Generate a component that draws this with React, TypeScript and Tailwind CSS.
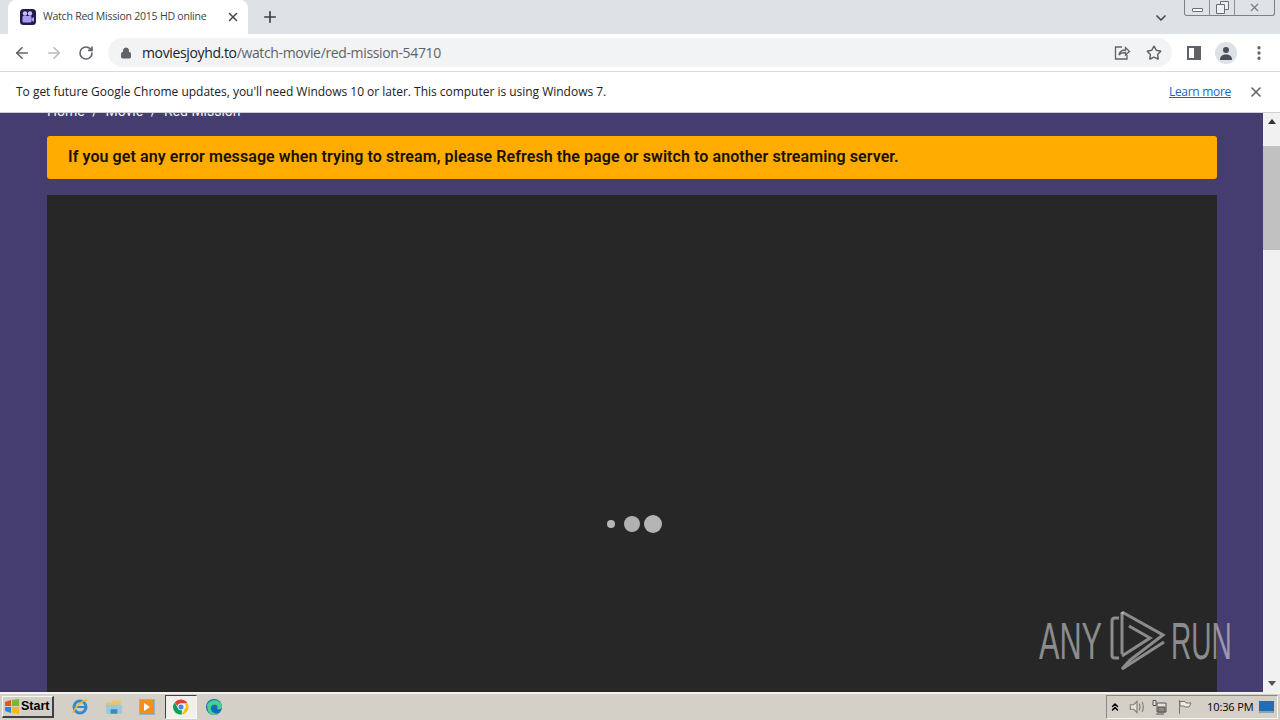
import { ArrowLeft, ArrowRight, ChevronDown, ChevronsUp, Lock, MoreVertical, Plus, RotateCw, Star, X } from "lucide-react";

const ChromeLogo = () => (
  <svg width="18" height="18" viewBox="0 0 48 48">
    <path d="M24 4a20 20 0 0 1 17.3 10H24a10 10 0 0 0-9.6 7.2L7.2 11.8A20 20 0 0 1 24 4z" fill="#db4437" />
    <path d="M41.3 14A20 20 0 0 1 26 43.9l8.6-15A10 10 0 0 0 32 14z" fill="#fbbc05" />
    <path d="M26 43.9A20 20 0 0 1 7.2 11.8l8.6 15a10 10 0 0 0 10.9 5z" fill="#0f9d58" />
    <circle cx="24" cy="24" r="8" fill="#4285f4" stroke="#fff" strokeWidth="2" />
  </svg>
);

const TabBar = () => (
  <div className="flex h-[34px] items-end bg-[#dee1e6] pl-2">
    <div className="flex h-[34px] w-[240px] items-center rounded-t-lg bg-white pl-3 pr-2">
      <svg width="16" height="16" viewBox="0 0 16 16" className="shrink-0">
        <rect width="16" height="16" rx="3.5" fill="#1f1b4d" />
        <rect x="2.5" y="7" width="9" height="6.5" rx="1" fill="#a99bf0" />
        <path d="M11.5 9.5 14 8v5l-2.500-1.500z" fill="#a99bf0" />
        <circle cx="5" cy="4.500" r="2.200" fill="#c9c0f7" />
        <circle cx="10" cy="4.500" r="2.200" fill="#c9c0f7" />
      </svg>
      <span className="ml-[7px] flex-1 whitespace-nowrap font-['Open_Sans',sans-serif] text-[10.5px] tracking-[-0.22px] text-[#3c4043]">Watch Red Mission 2015 HD online</span>
      <X size={14} strokeWidth={2.500} className="text-[#45484c]" />
    </div>
    <div className="ml-[13px] flex h-[34px] items-center">
      <Plus size={18} strokeWidth={2.200} className="text-[#3c4043]" />
    </div>
    <div className="ml-auto flex h-[34px] items-center self-start">
      <ChevronDown size={16} strokeWidth={2.500} className="mr-[15px] mt-[1px] text-[#45484c]" />
      <div className="mb-[18px] mr-[5px] flex h-[16px] w-[91px] items-center rounded-b-[3px] border border-t-0 border-[#7c8087] bg-[#dfe2e7] text-[#6b6f75]">
        <div className="flex h-full w-[25px] items-center justify-center border-r border-[#8d9096]">
          <div className="mt-[5px] h-[4px] w-[11px] rounded-[1px] border border-[#6b6f75] bg-white" />
        </div>
        <div className="flex h-full w-[25px] items-center justify-center border-r border-[#8d9096]">
          <svg width="13" height="13" viewBox="0 0 13 13" fill="#eef0f3" stroke="#6b6f75">
            <path d="M4.500 .5h8v8h-8z" />
            <path d="M.5 3.500h8v9h-8z" />
          </svg>
        </div>
        <div className="flex flex-1 items-center justify-center">
          <X size={13} strokeWidth={2} className="text-[#777b81]" />
        </div>
      </div>
    </div>
  </div>
);

const AddressBar = () => (
  <div className="flex h-[38px] items-center border-b border-[#d8dadd] bg-white">
    <ArrowLeft size={18} strokeWidth={2.200} className="ml-[13px] text-[#5f6368]" />
    <ArrowRight size={18} strokeWidth={2.200} className="ml-[14px] text-[#babcbe]" />
    <RotateCw size={16} strokeWidth={2.400} className="ml-[15px] text-[#5f6368]" />
    <div className="ml-[14px] flex h-[29px] w-[1064px] items-center rounded-full bg-[#f1f3f4]">
      <Lock size={12} fill="#5f6368" className="ml-[12px] text-[#5f6368]" />
      <span className="ml-[10px] font-['Open_Sans',sans-serif] text-[14px] tracking-[-0.36px] text-[#202124]">
        moviesjoyhd.to<span className="text-[#5f6368]">/watch-movie/red-mission-54710</span>
      </span>
      <svg width="18" height="18" viewBox="0 0 18 18" fill="none" stroke="#5f6368" strokeWidth="1.300" className="ml-auto">
        <path d="M9 3H2.500v12h11.500v-4" />
        <path d="M6 11c.5-3 3-5 6.500-5V3.500L16.500 7.500 12.500 11V8.500C10 8.500 7.500 9 6 11z" />
      </svg>
      <Star size={16} strokeWidth={2.200} className="ml-[15px] mr-[10px] text-[#5f6368]" />
    </div>
    <div className="ml-[15px] flex h-[14px] w-[14px] justify-end border-2 border-[#5f6368]">
      <div className="h-full w-[5px] bg-[#5f6368]" />
    </div>
    <div className="ml-[14px] flex h-[22px] w-[22px] items-center justify-center overflow-hidden rounded-full bg-[#dee1e6]">
      <svg width="14" height="14" viewBox="0 0 14 14" fill="#4a4f57">
        <circle cx="7" cy="4" r="3" />
        <path d="M1 14c0-4 2.500-5.500 6-5.500s6 1.500 6 5.500z" />
      </svg>
    </div>
    <MoreVertical size={18} strokeWidth={2.400} className="ml-[13px] text-[#5f6368]" />
  </div>
);

const InfoBar = () => (
  <div className="flex h-[41px] items-center border-b border-[#cfd0d4] bg-white pl-4 pr-[16px]">
    <span className="font-['Open_Sans',sans-serif] text-[12px] tracking-[-0.02px] text-[#202124]">
      To get future Google Chrome updates, you'll need Windows 10 or later. This computer is using Windows 7.
    </span>
    <a className="ml-auto font-['Open_Sans',sans-serif] text-[12px] tracking-[-0.3px] text-[#1a68c4] underline">Learn more</a>
    <X size={16} strokeWidth={2.400} className="ml-[17px] text-[#5f6368]" />
  </div>
);

const Page = () => (
  <div className="relative flex min-h-0 flex-1 overflow-hidden bg-[#453d6f]">
    <div className="flex-1 overflow-hidden px-[47px] pr-[46px]">
      <div className="-mt-[11px] flex h-[18px] items-center gap-[7.5px] font-['Roboto',sans-serif] text-[14px] text-[#f2f2f2]">
        <span>Home</span>
        <span>/</span>
        <span>Movie</span>
        <span>/</span>
        <span>Red Mission</span>
      </div>
      <div className="mt-[16px] flex h-[43px] items-center rounded-[3px] bg-[#ffab00] pb-[2px] pl-[21px] font-['Roboto',sans-serif] text-[16px] font-semibold tracking-[0.08px] text-[#1a1200]">
        If you get any error message when trying to stream, please Refresh the page or switch to another streaming server.
      </div>
      <div className="mt-[16px] flex h-[520px] items-start justify-center bg-[#272727] pl-[4px] pt-[320px]">
        <div className="flex items-center">
          <div className="h-[8px] w-[8px] rounded-full bg-[#b5b5b5]" />
          <div className="ml-[9px] h-[16px] w-[16px] rounded-full bg-[#b0b0b0]" />
          <div className="ml-[4px] h-[18px] w-[18px] rounded-full bg-[#b5b5b5]" />
        </div>
      </div>
    </div>
    <div className="flex w-[17px] shrink-0 flex-col items-center bg-[#f1f1f1]">
      <div className="mt-[6px] h-0 w-0 border-x-[4px] border-b-[5px] border-x-transparent border-b-[#333]" />
      <div className="mt-[22px] h-[104px] w-full bg-[#c1c1c1]" />
      <div className="mt-auto mb-[6px] h-0 w-0 border-x-[4px] border-t-[5px] border-x-transparent border-t-[#555]" />
    </div>
    <div className="pointer-events-none absolute left-[1039px] top-[496px] flex h-[64px] items-center text-[#ffffff78]">
      <span className="w-[64px] origin-left scale-x-[0.59] font-['Liberation_Sans',sans-serif] text-[52px] leading-none whitespace-nowrap">ANY</span>
      <svg width="56" height="62" viewBox="0 0 56 62" fill="none" stroke="currentColor" strokeWidth="3" className="ml-[7px]">
        <path d="M9 8H5Q2 8 2 11V45Q2 48 5 48H9" />
        <path d="M12 2 L53 25 L20 50 L12 59 L54 32" />
        <path d="M12 2 V44 M19 16 L40 28 L12 46" />
      </svg>
      <span className="ml-[5px] w-[62px] origin-left scale-x-[0.54] font-['Liberation_Sans',sans-serif] text-[52px] leading-none whitespace-nowrap">RUN</span>
    </div>
  </div>
);

const Taskbar = () => (
  <div className="flex h-[28px] shrink-0 items-center border-t-2 border-[#f4f2ee] bg-[#d4d0c8]">
    <div className="ml-[2px] flex h-[22px] w-[52px] items-center border border-b-2 border-r-2 border-[#f7f6f3] border-b-[#404040] border-r-[#404040] bg-[#d4d0c8] pl-[1px] font-['Liberation_Sans',sans-serif] text-[12.5px] font-bold text-black">
      <svg width="16" height="16" viewBox="0 0 16 16">
        <path d="M1 3l6-2v6H1z" fill="#e5512b" />
        <path d="M8 1l7-1v7H8z" fill="#7ab82d" />
        <path d="M1 8h6v6l-6-2z" fill="#2a8ad6" />
        <path d="M8 8h7v7l-7-1z" fill="#f5b81f" />
      </svg>
      <span className="ml-[1px]">Start</span>
    </div>
    <svg width="18" height="18" viewBox="0 0 18 18" fill="none" className="ml-[17px]">
      <circle cx="9" cy="9" r="6" stroke="#2f8ccf" strokeWidth="3" />
      <path d="M3 9h12" stroke="#2f8ccf" strokeWidth="2" />
      <path d="M2 15C4 9 10 3 16 2" stroke="#e9b93a" strokeWidth="1.500" />
    </svg>
    <svg width="18" height="18" viewBox="0 0 16 16" className="ml-[16px]">
      <path d="M1 4h5l1-2h7v5H1z" fill="#e8c569" />
      <path d="M1 6h14v8H1z" fill="#9cc8dc" />
      <path d="M5 14v-4h6v4z" fill="#3f8bb0" />
    </svg>
    <div className="ml-[16px] flex h-[16px] w-[16px] items-center justify-center border border-[#8fb3d3] bg-[#ef8f1f]">
      <div className="h-0 w-0 border-y-[4px] border-l-[6px] border-y-transparent border-l-white" />
    </div>
    <div className="ml-[10px] flex h-[24px] w-[32px] items-center justify-center border border-b-[#f7f6f3] border-l-[#404040] border-r-[#f7f6f3] border-t-[#404040] bg-[#f2f0ec]">
      <ChromeLogo />
    </div>
    <svg width="18" height="18" viewBox="0 0 18 18" className="ml-[8px]">
      <circle cx="9" cy="9" r="8" fill="#0f6cbd" />
      <path d="M2 7c2-6 13-7 15 1 .5 3-3 4-5 3 2-3-1-5-4-4-3 1-3 6 1 8 2 .8 4 .5 5 0-3 3-9 3-11-2-.6-2-.8-4-1-6z" fill="#4ad08a" />
    </svg>
    <div className="ml-auto mr-[2px] flex h-[24px] w-[172px] items-center border border-b-[#f7f6f3] border-l-[#8a8880] border-r-[#f7f6f3] border-t-[#8a8880]">
      <ChevronsUp size={12} strokeWidth={3} className="ml-[2px] text-black" />
      <svg width="18" height="18" viewBox="0 0 16 16" fill="none" stroke="#7d7d78" className="ml-[7px]">
        <path d="M2 6h3l3-3v10l-3-3H2z" fill="#e4e2dc" />
        <path d="M10 5c1 2 1 4 0 6M12.500 3.500c1.500 3 1.500 6 0 9" />
      </svg>
      <svg width="17" height="17" viewBox="0 0 17 17" fill="none" stroke="#55554f" className="ml-[5px]">
        <path d="M2 1.500h3v5H2zM6 4h9v9H6z" fill="#e4e2dc" />
        <path d="M7 8h7v5H7z" fill="#8b8b85" />
        <path d="M5 15h8" />
      </svg>
      <svg width="16" height="16" viewBox="0 0 16 16" fill="none" stroke="#77776f" className="ml-[9px]">
        <path d="M2.500 1v14" />
        <path d="M3 2.500h5l1 1.500h5l-2 4H8L7 7H3z" fill="#ecebe5" />
      </svg>
      <span className="ml-[14px] whitespace-nowrap font-['Open_Sans',sans-serif] text-[11px] tracking-[-0.1px] text-black">10:36 PM</span>
      <div className="ml-auto mr-[3px] h-[12px] w-[15px] border-b-2 border-[#8aa2b8] bg-[#1f6fb8]" />
    </div>
  </div>
);

export default function App() {
  return (
    <div className="flex h-[720px] w-[1280px] flex-col overflow-hidden bg-white">
      <TabBar />
      <AddressBar />
      <InfoBar />
      <Page />
      <Taskbar />
    </div>
  );
}
